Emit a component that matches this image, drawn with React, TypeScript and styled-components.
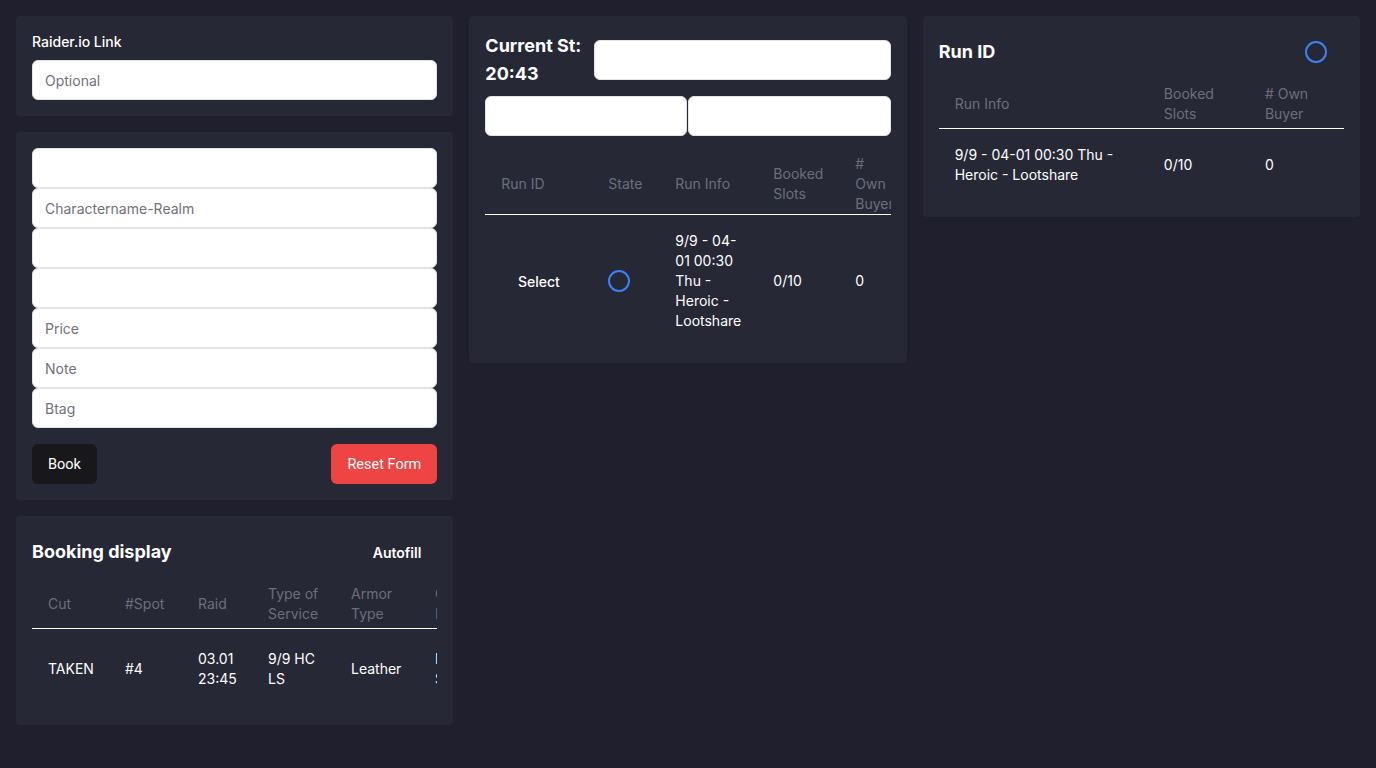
import React from "react";
import styled, { createGlobalStyle } from "styled-components";

const Global = createGlobalStyle`
  * { box-sizing: border-box; }
  html, body { margin: 0; padding: 0; background: #1f1f2d; }
  body { font-family: Inter, "Noto Sans", sans-serif; font-size: 14px; line-height: 20px; color: #ffffff; }
`;

const Page = styled.div`
  display: grid;
  grid-template-columns: repeat(3, 1fr);
  gap: 16px;
  padding: 16px;
  align-items: start;
  min-height: 768px;
`;

const Column = styled.div`
  display: flex;
  flex-direction: column;
  gap: 16px;
  min-width: 0;
`;

const Card = styled.section`
  background: #262836;
  border-radius: 4px;
  padding: 16px;
  min-width: 0;
`;

const Label = styled.label`
  display: block;
  font-weight: 500;
  font-size: 14px;
  line-height: 20px;
  margin-bottom: 8px;
`;

const Input = styled.input`
  display: block;
  width: 100%;
  height: 40px;
  border: 1px solid #e4e4e7;
  border-radius: 6px;
  background: #ffffff;
  padding: 0 12px;
  font-family: Inter, sans-serif;
  font-size: 14px;
  color: #111;
  outline: none;
  min-width: 0;
  &::placeholder { color: #71717a; }
`;

const Stack = styled.div`
  display: flex;
  flex-direction: column;
`;

const Actions = styled.div`
  display: flex;
  justify-content: space-between;
  margin-top: 16px;
`;

const Button = styled.button<{ $variant?: "dark" | "danger" | "ghost"; $weight?: number }>`
  height: 40px;
  padding: 0 16px;
  border: none;
  border-radius: 6px;
  font-family: ${(p) => (p.$variant === "ghost" ? "Inter, sans-serif" : "Roboto, sans-serif")};
  font-size: ${(p) => (p.$variant === "ghost" ? 14 : 14.5)}px;
  font-weight: ${(p) => p.$weight ?? (p.$variant === "ghost" ? 600 : 400)};
  color: #ffffff;
  cursor: pointer;
  background: ${(p) =>
    p.$variant === "dark" ? "#18181b" : p.$variant === "danger" ? "#ef4444" : "transparent"};
`;

const CardHeader = styled.div`
  display: flex;
  align-items: center;
  justify-content: space-between;
  min-height: 40px;
`;

const Title = styled.h2<{ $width?: number }>`
  margin: 0;
  font-size: 18px;
  line-height: 28px;
  font-weight: 700;
  ${(p) => (p.$width ? `width: ${p.$width}px; flex: none;` : "")}
`;

const StatusRow = styled.div`
  display: flex;
  align-items: center;
  gap: 8px;
`;

const InputPair = styled.div`
  display: flex;
  gap: 1px;
  margin-top: 8px;
`;

const TableWrap = styled.div<{ $top: number }>`
  overflow: hidden;
  margin-top: ${(p) => p.$top}px;
`;

const Table = styled.table<{ $width?: number }>`
  border-collapse: collapse;
  table-layout: fixed;
  width: ${(p) => (p.$width ? `${p.$width}px` : "100%")};
`;

const Col = styled.col<{ $w: number }>`
  width: ${(p) => p.$w}px;
`;

const HeadRow = styled.tr`
  border-bottom: 1px solid #ffffff;
`;

const Th = styled.th`
  height: 48px;
  text-align: left;
  font-weight: 400;
  color: #6b6f7c;
  padding: 0 16px;
  vertical-align: middle;
`;

const Td = styled.td<{ $pad?: number; $center?: boolean }>`
  padding: ${(p) => p.$pad ?? 16}px 16px;
  vertical-align: middle;
  color: #ffffff;
  text-align: ${(p) => (p.$center ? "center" : "left")};
  white-space: normal;
`;

const Ring = styled.span`
  display: inline-block;
  width: 22px;
  height: 22px;
  border-radius: 50%;
  border: 2px solid #3b82f6;
  vertical-align: middle;
`;

const RingBox = styled.div`
  width: 40px;
  height: 40px;
  display: flex;
  align-items: center;
  justify-content: center;
  margin-right: 8px;
`;

export default function App() {
  return (
    <>
      <Global />
      <Page>
        <Column>
          <Card>
            <Label>Raider.io Link</Label>
            <Input placeholder="Optional" />
          </Card>
          <Card>
            <Stack>
              <Input />
              <Input placeholder="Charactername-Realm" />
              <Input />
              <Input />
              <Input placeholder="Price" />
              <Input placeholder="Note" />
              <Input placeholder="Btag" />
            </Stack>
            <Actions>
              <Button $variant="dark">Book</Button>
              <Button $variant="danger">Reset Form</Button>
            </Actions>
          </Card>
          <Card>
            <CardHeader>
              <Title>Booking display</Title>
              <Button $variant="ghost">Autofill</Button>
            </CardHeader>
            <TableWrap $top={8}>
              <Table $width={660}>
                <colgroup>
                  <Col $w={77} />
                  <Col $w={73} />
                  <Col $w={70} />
                  <Col $w={83} />
                  <Col $w={84} />
                  <Col $w={110} />
                  <Col $w={90} />
                  <Col $w={73} />
                </colgroup>
                <thead>
                  <HeadRow>
                    <Th>Cut</Th>
                    <Th>#Spot</Th>
                    <Th>Raid</Th>
                    <Th>Type of Service</Th>
                    <Th>Armor Type</Th>
                    <Th>Character Name</Th>
                    <Th>Btag</Th>
                    <Th>Note</Th>
                  </HeadRow>
                </thead>
                <tbody>
                  <tr>
                    <Td $pad={20}>TAKEN</Td>
                    <Td $pad={20}>#4</Td>
                    <Td $pad={20}>03.01 23:45</Td>
                    <Td $pad={20}>9/9 HC LS</Td>
                    <Td $pad={20}>Leather</Td>
                    <Td $pad={20}>Bob Silvermoon</Td>
                    <Td $pad={20}>Bob#2231</Td>
                    <Td $pad={20}>-</Td>
                  </tr>
                </tbody>
              </Table>
            </TableWrap>
          </Card>
        </Column>

        <Column>
          <Card>
            <StatusRow>
              <Title $width={101}>Current St: 20:43</Title>
              <Input />
            </StatusRow>
            <InputPair>
              <Input />
              <Input />
            </InputPair>
            <TableWrap $top={18}>
              <Table $width={428}>
                <colgroup>
                  <Col $w={107} />
                  <Col $w={67} />
                  <Col $w={98} />
                  <Col $w={82} />
                  <Col $w={74} />
                </colgroup>
                <thead>
                  <HeadRow>
                    <Th>Run ID</Th>
                    <Th>State</Th>
                    <Th>Run Info</Th>
                    <Th>Booked Slots</Th>
                    <Th># Own Buyer</Th>
                  </HeadRow>
                </thead>
                <tbody>
                  <tr>
                    <Td $center>
                      <Button $variant="ghost" $weight={500}>Select</Button>
                    </Td>
                    <Td>
                      <Ring />
                    </Td>
                    <Td>9/9 - 04-01 00:30 Thu - Heroic - Lootshare</Td>
                    <Td>0/10</Td>
                    <Td>0</Td>
                  </tr>
                </tbody>
              </Table>
            </TableWrap>
          </Card>
        </Column>

        <Column>
          <Card>
            <CardHeader>
              <Title>Run ID</Title>
              <RingBox>
                <Ring />
              </RingBox>
            </CardHeader>
            <TableWrap $top={8}>
              <Table>
                <colgroup>
                  <Col $w={209} />
                  <Col $w={101} />
                  <Col $w={95} />
                </colgroup>
                <thead>
                  <HeadRow>
                    <Th>Run Info</Th>
                    <Th>Booked Slots</Th>
                    <Th># Own Buyer</Th>
                  </HeadRow>
                </thead>
                <tbody>
                  <tr>
                    <Td>9/9 - 04-01 00:30 Thu - Heroic - Lootshare</Td>
                    <Td>0/10</Td>
                    <Td>0</Td>
                  </tr>
                </tbody>
              </Table>
            </TableWrap>
          </Card>
        </Column>
      </Page>
    </>
  );
}
